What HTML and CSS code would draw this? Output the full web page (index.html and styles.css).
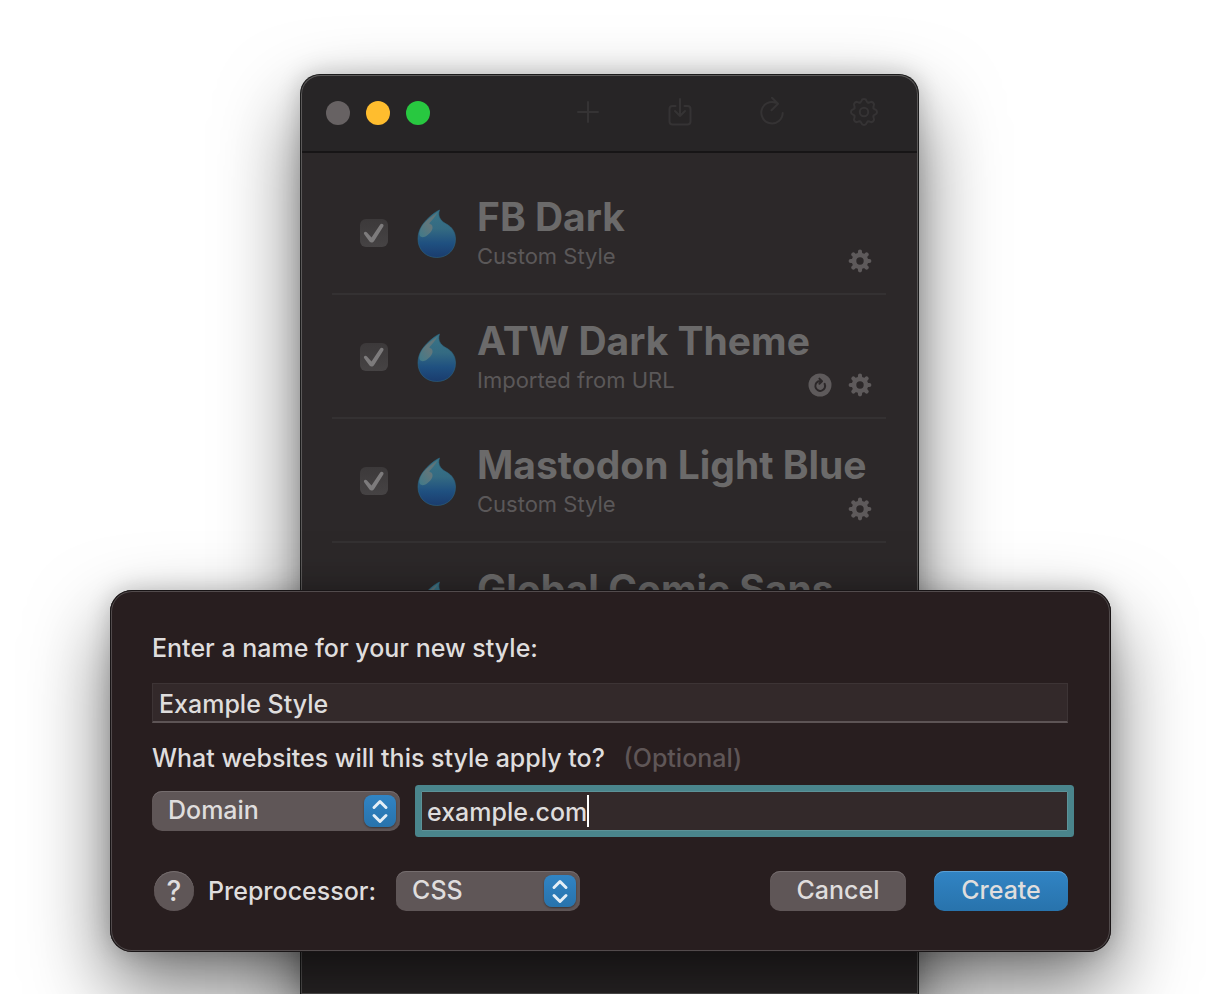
FILE: index.html
```html
<!DOCTYPE html>
<html lang="en">
<head>
<meta charset="utf-8">
<title>New Style</title>
<link rel="stylesheet" href="styles.css">
</head>
<body>
<svg class="defs" aria-hidden="true">
  <defs>
    <linearGradient id="drop-fill" x1="0" y1="0" x2="0" y2="1">
      <stop offset="0" stop-color="#397587"/>
      <stop offset="0.4" stop-color="#346a82"/>
      <stop offset="0.7" stop-color="#1f5080"/>
      <stop offset="1" stop-color="#1a3c6e"/>
    </linearGradient>
    <linearGradient id="drop-shine" x1="1" y1="0" x2="0" y2="1">
      <stop offset="0" stop-color="#5d7378"/>
      <stop offset="0.5" stop-color="#61777c"/>
      <stop offset="1" stop-color="#3f7a8a"/>
    </linearGradient>
    <path id="tooth" d="M-3.94 -9.5C-3.1 -9.9 -2.8 -10.3 -2.5 -11.3C-2.2 -12.6 -1.6 -13 0 -13C1.6 -13 2.2 -12.6 2.5 -11.3C2.8 -10.3 3.1 -9.9 3.94 -9.5"/>
  </defs>
  <symbol id="drop" viewBox="0 0 40 50">
    <path d="M22.5 1C20.5 7 23 11.5 29 14.8C35 18 38.5 23 38.5 30C38.5 41 30.5 48.500 19.800 48.500C9 48.500 1 41 1 30C1 21 5.500 14.500 12 8.500C15 5.700 19 2.500 22.500 1Z" fill="url(#drop-fill)" stroke="#2d6580" stroke-width="0.600"/>
    <path d="M20.500 3.500C14 8 4.500 14 2.500 23C1.500 28.500 6 29.500 10 26.500C15 23 17 18.500 14.500 15.800C13.500 14.800 12 15 12.500 14C15 11 18.500 7.500 20.500 3.500Z" fill="url(#drop-shine)"/>
  </symbol>
  <symbol id="gear" viewBox="-12 -12 24 24">
    <circle r="6" fill="none" stroke="currentColor" stroke-width="4.600"/>
    <path d="M0 -7.500V-9.300M0 7.500V9.300M-7.500 0H-9.300M7.500 0H9.300M-5.300 -5.300L-6.600 -6.600M5.300 5.300L6.600 6.600M5.300 -5.300L6.600 -6.600M-5.300 5.300L-6.600 6.600" fill="none" stroke="currentColor" stroke-width="4.200" stroke-linecap="round"/>
  </symbol>
  <symbol id="updown" viewBox="0 0 32 32">
    <path d="M10 12.500L16 6.500L22 12.500M10 20.500L16 26.500L22 20.500" fill="none" stroke="#e4eef6" stroke-width="3" stroke-linecap="round" stroke-linejoin="round"/>
  </symbol>
</svg>

<main class="desktop">
  <section class="app" aria-label="Styles">
    <header class="toolbar">
      <div class="lights">
        <button class="light" aria-label="Close"></button>
        <button class="light light-min" aria-label="Minimize"></button>
        <button class="light light-max" aria-label="Zoom"></button>
      </div>
      <div class="tools">
        <button class="tool" aria-label="Add">
          <svg viewBox="-16 -16 32 32"><path d="M-10 0H10M0 -10V10"/></svg>
        </button>
        <button class="tool" aria-label="Import">
          <svg viewBox="-16 -16 32 32"><path d="M-4.500 -6H-7.500Q-10.500 -6 -10.500 -3V9.500Q-10.500 12.500 -7.500 12.500H7.500Q10.500 12.500 10.500 9.500V-3Q10.500 -6 7.500 -6H4.500M0 -13V4M-5 -1L0 4L5 -1"/></svg>
        </button>
        <button class="tool" aria-label="Refresh">
          <svg viewBox="-16 -16 32 32"><path d="M10.700 1A10.700 10.700 0 1 1 4 -9.200M0 -14.300L6 -8.300L-0.500 -1.800"/></svg>
        </button>
        <button class="tool" aria-label="Settings">
          <svg viewBox="-16 -16 32 32"><circle r="4.200"/><use href="#tooth"/><use href="#tooth" transform="rotate(45)"/><use href="#tooth" transform="rotate(90)"/><use href="#tooth" transform="rotate(135)"/><use href="#tooth" transform="rotate(180)"/><use href="#tooth" transform="rotate(225)"/><use href="#tooth" transform="rotate(270)"/><use href="#tooth" transform="rotate(315)"/></svg>
        </button>
      </div>
    </header>
    <ul class="styles">
      <li class="style">
        <input class="check" type="checkbox" checked aria-label="Enable FB Dark">
        <svg class="drop"><use href="#drop"/></svg>
        <div class="info"><h2 class="name">FB Dark</h2><p class="kind">Custom Style</p></div>
        <div class="actions">
          <button class="action" aria-label="Options"><svg><use href="#gear"/></svg></button>
        </div>
      </li>
      <li class="style">
        <input class="check" type="checkbox" checked aria-label="Enable ATW Dark Theme">
        <svg class="drop"><use href="#drop"/></svg>
        <div class="info"><h2 class="name">ATW Dark Theme</h2><p class="kind">Imported from URL</p></div>
        <div class="actions">
          <button class="action" aria-label="Update"><svg viewBox="-12 -12 24 24"><circle r="11.500" fill="currentColor"/><path class="cut" d="M4.600 -1.200A4.900 4.900 0 1 1 0 -3.900M-0.600 -6.400L2 -3.800L-0.600 -1.200"/></svg></button>
          <button class="action" aria-label="Options"><svg><use href="#gear"/></svg></button>
        </div>
      </li>
      <li class="style">
        <input class="check" type="checkbox" checked aria-label="Enable Mastodon Light Blue">
        <svg class="drop"><use href="#drop"/></svg>
        <div class="info"><h2 class="name">Mastodon Light Blue</h2><p class="kind">Custom Style</p></div>
        <div class="actions">
          <button class="action" aria-label="Options"><svg><use href="#gear"/></svg></button>
        </div>
      </li>
      <li class="style">
        <input class="check" type="checkbox" checked aria-label="Enable Global Comic Sans">
        <svg class="drop"><use href="#drop"/></svg>
        <div class="info"><h2 class="name">Global Comic Sans</h2></div>
      </li>
    </ul>
  </section>

  <form class="dialog" role="dialog" aria-label="New style">
    <label class="label" for="style-name">Enter a name for your new style:</label>
    <input class="text" id="style-name" type="text" value="Example Style">
    <label class="label" for="sites">What websites will this style apply to? <span class="optional">(Optional)</span></label>
    <div class="sites">
      <div class="picker picker-wide">
        <select class="select" aria-label="Match type"><option>Domain</option></select>
        <svg class="arrows" aria-hidden="true"><use href="#updown"/></svg>
      </div>
      <div class="focused">
        <input class="site" id="sites" type="text" value="example.com">
        <span class="caret"></span>
      </div>
    </div>
    <div class="footer">
      <button class="help" type="button" aria-label="Help">?</button>
      <label class="pre" for="preprocessor">Preprocessor:</label>
      <div class="picker">
        <select class="select" id="preprocessor"><option>CSS</option></select>
        <svg class="arrows" aria-hidden="true"><use href="#updown"/></svg>
      </div>
      <button class="button" type="button">Cancel</button>
      <button class="button button-main" type="button">Create</button>
    </div>
  </form>
</main>
</body>
</html>
```
FILE: styles.css
```css
* { box-sizing: border-box; }

body {
  margin: 0;
  background: #fff;
  font-family: Inter, "Liberation Sans", sans-serif;
  font-size: 25px;
  color: #dfdddd;
}

button, input, select { font: inherit; color: inherit; margin: 0; }
button { border: 0; padding: 0; background: none; }
.defs { position: absolute; width: 0; height: 0; }

.desktop {
  position: relative;
  display: flex;
  height: 100vh;
  overflow: hidden;
  padding: 74px 303px 0 300px;
}

.app {
  flex: 1;
  min-width: 0;
  border: 1px solid #1c1c1c;
  border-bottom: 0;
  border-radius: 20px 20px 0 0;
  background: #2c2829;
  box-shadow: inset 0 0 0 1px #5b5959, 0 36px 80px rgba(0, 0, 0, .55), 0 0 24px rgba(0, 0, 0, .2);
}

.toolbar {
  display: flex;
  align-items: center;
  justify-content: space-between;
  height: 78px;
  margin: 0 1px;
  padding: 0 37px 2px 24px;
  border-top: 1px solid #5b5959;
  border-bottom: 2px solid #171516;
  border-radius: 19px 19px 0 0;
  background: #272526;
}

.lights { display: flex; gap: 16px; }
.light { width: 24px; height: 24px; border-radius: 50%; background: #676263; }
.light-min { background: #ffbd2e; }
.light-max { background: #28c840; }

.tools { display: flex; gap: 60px; padding-bottom: 2px; }
.tool { width: 32px; height: 32px; color: #353334; }
.tool svg { display: block; width: 32px; height: 32px; fill: none; stroke: currentColor; stroke-width: 2; stroke-linecap: round; stroke-linejoin: round; }

.styles { list-style: none; margin: 0; padding: 18px 32px 0 31px; }

.style {
  display: flex;
  height: 124px;
  padding: 0 14px 0 28px;
  border-bottom: 2px solid #343132;
}

.check {
  flex: none;
  appearance: none;
  width: 28px;
  height: 28px;
  margin-top: 48px;
  border-radius: 6px;
  background: linear-gradient(#3c393a, #464344);
  display: grid;
  place-items: center;
}
.check::after {
  content: "";
  width: 22px;
  height: 22px;
  background: #7d7b7c;
  clip-path: path("M1.200 12.300C0 10.500 2.500 8.800 4 10.500L8.500 15.500L17.200 2.500C18.500 .6 21.500 2.400 20.300 4.500L11 19.300C10 21 7.500 21 6.500 19.600Z");
}

.drop { flex: none; width: 40px; height: 50px; margin: 38px 0 0 29px; }

.info { flex: 1; min-width: 0; margin: 21px 0 0 20px; white-space: nowrap; }
.name { margin: 0; font-size: 39px; line-height: 50px; font-weight: 650; color: #6b6a6a; }
.kind { margin: 0; font-size: 22px; line-height: 28px; color: #5b5859; }

.actions { flex: none; display: flex; gap: 16px; align-self: flex-end; margin: 0 0 20px -80px; }
.action { width: 24px; height: 24px; color: #5e5a5b; }
.action svg { display: block; width: 24px; height: 24px; }
.cut { fill: none; stroke: #2c2829; stroke-width: 2; stroke-linecap: round; stroke-linejoin: round; }

.dialog {
  position: absolute;
  top: 590px;
  left: 110px;
  right: 111px;
  padding: 42px 43px 41px 42px;
  border-radius: 22px;
  background: #281e1f;
  font-weight: 450;
  box-shadow: inset 0 0 0 1px #191516, inset 0 0 0 2px #524b4c, 0 36px 80px rgba(0, 0, 0, .55), 0 0 24px rgba(0, 0, 0, .2);
}

.label { display: block; line-height: 32px; }
.optional { margin-left: 12px; color: #5f5657; }

.text {
  display: block;
  width: 100%;
  height: 40px;
  margin: 19px 0;
  padding: 2px 6px 0;
  border: 1px solid #3d3435;
  border-bottom: 2px solid #5d5455;
  background: #33292a;
  outline: 0;
}

.sites { display: flex; gap: 21px; margin-top: 17px; }

.picker { position: relative; width: 184px; }
.picker-wide { width: 248px; }
.select {
  display: block;
  appearance: none;
  width: 100%;
  height: 40px;
  padding: 0 44px 2px 16px;
  border: 0;
  border-radius: 10px;
  background: #5f5657;
  box-shadow: inset 0 1px #756d6e;
}
.arrows {
  position: absolute;
  top: 4px;
  right: 4px;
  width: 32px;
  height: 32px;
  border-radius: 8px;
  background: linear-gradient(#3184c4, #2873ac);
  box-shadow: 0 1px 2px rgba(0, 0, 0, .4);
  pointer-events: none;
}

.focused {
  flex: 1;
  display: flex;
  align-items: center;
  height: 40px;
  padding-left: 5px;
  border: 1px solid #5d9298;
  background: #33292a;
  box-shadow: 0 0 0 6px #4a858c;
  border-radius: 1px;
}
.site { field-sizing: content; padding: 2px 0 0; border: 0; background: none; outline: 0; }
.caret { width: 2px; height: 32px; background: #fff; }

.footer { display: flex; align-items: center; margin-top: 40px; }
.help {
  width: 40px;
  height: 40px;
  margin-left: 2px;
  border-radius: 50%;
  background: #5f5657;
  font-size: 28px;
  box-shadow: inset 0 1px #756d6e;
}
.pre { margin: 0 20px 0 14px; }
.button {
  width: 136px;
  height: 40px;
  margin-left: auto;
  padding-bottom: 2px;
  border-radius: 10px;
  background: #5f5657;
  box-shadow: inset 0 1px #756d6e;
}
.button-main {
  width: 134px;
  margin-left: 28px;
  background: linear-gradient(#3184c4, #2873ac);
  box-shadow: inset 0 1px #5a9fd4;
}
```
